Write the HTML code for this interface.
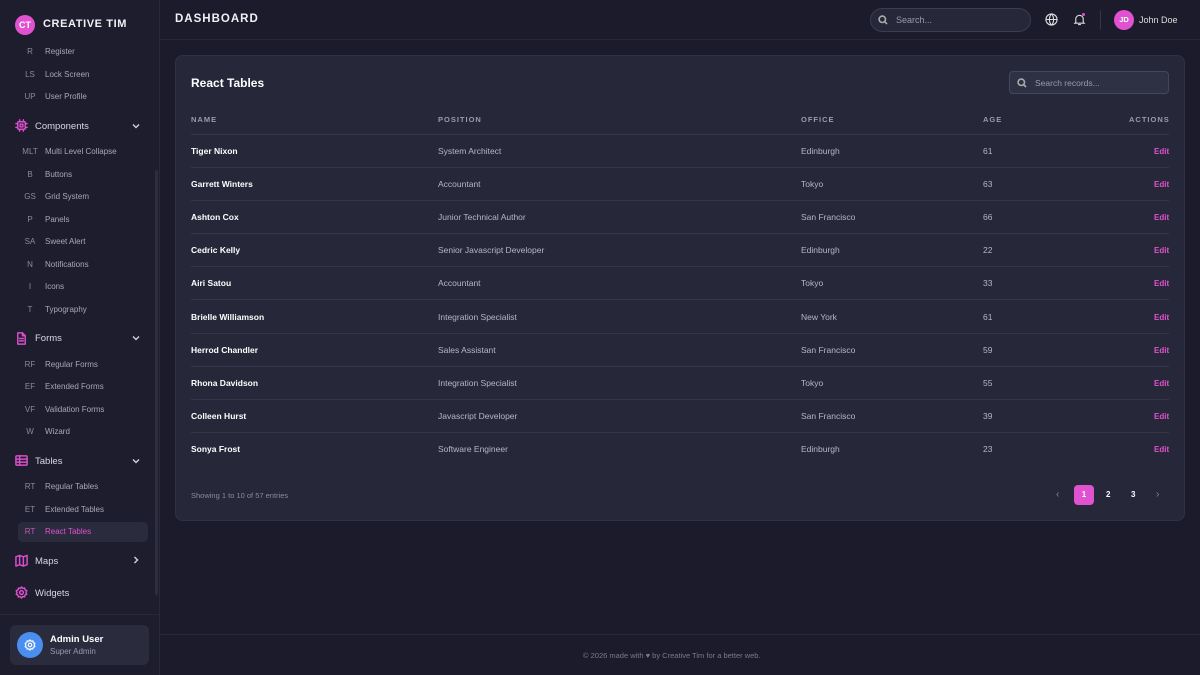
<!DOCTYPE html>
<html><head><meta charset="utf-8"><style>
*{box-sizing:border-box;margin:0;padding:0}
body{width:1200px;height:675px;overflow:hidden;background:#1b1b2b;font-family:"Liberation Sans",sans-serif;color:#e6e6ef;position:relative}
.sb{position:absolute;left:0;top:0;width:160px;height:675px;background:#1d1d2e;border-right:1px solid #272838}
.a{position:absolute;white-space:nowrap}
.sub{font-size:8px;color:#a7a8b6}
.sub b{display:inline-block;width:28px;font-weight:normal;color:#8a8b99;text-align:center;margin-right:1px}
.sec{font-size:9.5px;color:#d8d8e2}
svg.i{position:absolute;left:15px;width:13px;height:13px;fill:none;stroke:#d84fc9;stroke-width:1.6;stroke-linecap:round;stroke-linejoin:round}
svg.ch{position:absolute;left:132px;width:8px;height:8px;fill:none;stroke:#ccc;stroke-width:1.5}
.hd{font-size:7.5px;letter-spacing:1px;color:#9a9bab;font-weight:bold}
.row{position:absolute;left:191px;width:978px;height:1px;background:#34364a}
.c{position:absolute;font-size:8.5px;color:#b6b7c5}
.n{font-weight:bold;color:#fff}
.e{color:#e052cf;font-weight:bold;font-size:8px}
svg.s{position:absolute;width:10px;height:10px;fill:none;stroke:#aaa;stroke-width:1.6}
</style></head><body>
<div class="sb">
 <div class="a" style="left:15px;top:15px;width:20px;height:20px;border-radius:50%;background:#e052cf;color:#fff;font-size:9px;font-weight:bold;text-align:center;line-height:20px">CT</div>
 <div class="a" style="left:43px;top:18px;font-size:11px;font-weight:bold;letter-spacing:0.6px;color:#f0f0f5">CREATIVE TIM</div>
 <div class="a sub" style="top:47px;left:16px"><b>R</b>Register</div>
 <div class="a sub" style="top:70px;left:16px"><b>LS</b>Lock Screen</div>
 <div class="a sub" style="top:92px;left:16px"><b>UP</b>User Profile</div>
 <svg class="i" style="top:119px" viewBox="0 0 14 14"><rect x="3" y="3" width="8" height="8" rx="1"/><rect x="5.5" y="5.5" width="3" height="3"/><path d="M5 1v2M9 1v2M5 11v2M9 11v2M1 5h2M1 9h2M11 5h2M11 9h2"/></svg>
 <div class="a sec" style="left:35px;top:121px">Components</div>
 <svg class="ch" style="top:122px" viewBox="0 0 8 8"><path d="M1 2.5l3 3 3-3"/></svg>
 <div class="a sub" style="top:147px;left:16px"><b>MLT</b>Multi Level Collapse</div>
 <div class="a sub" style="top:170px;left:16px"><b>B</b>Buttons</div>
 <div class="a sub" style="top:192px;left:16px"><b>GS</b>Grid System</div>
 <div class="a sub" style="top:215px;left:16px"><b>P</b>Panels</div>
 <div class="a sub" style="top:237px;left:16px"><b>SA</b>Sweet Alert</div>
 <div class="a sub" style="top:260px;left:16px"><b>N</b>Notifications</div>
 <div class="a sub" style="top:282px;left:16px"><b>I</b>Icons</div>
 <div class="a sub" style="top:305px;left:16px"><b>T</b>Typography</div>
 <svg class="i" style="top:332px" viewBox="0 0 14 14"><path d="M3 1h5l3 3v9H3z"/><path d="M8 1v3h3M5 7h4M5 9.5h4"/></svg>
 <div class="a sec" style="left:35px;top:333px">Forms</div>
 <svg class="ch" style="top:334px" viewBox="0 0 8 8"><path d="M1 2.5l3 3 3-3"/></svg>
 <div class="a sub" style="top:360px;left:16px"><b>RF</b>Regular Forms</div>
 <div class="a sub" style="top:382px;left:16px"><b>EF</b>Extended Forms</div>
 <div class="a sub" style="top:405px;left:16px"><b>VF</b>Validation Forms</div>
 <div class="a sub" style="top:427px;left:16px"><b>W</b>Wizard</div>
 <svg class="i" style="top:454px" viewBox="0 0 14 14"><rect x="1" y="2" width="12" height="10" rx="1"/><path d="M1 5.5h12M1 8.7h12M5 2v10"/></svg>
 <div class="a sec" style="left:35px;top:456px">Tables</div>
 <svg class="ch" style="top:457px" viewBox="0 0 8 8"><path d="M1 2.5l3 3 3-3"/></svg>
 <div class="a sub" style="top:482px;left:16px"><b>RT</b>Regular Tables</div>
 <div class="a sub" style="top:505px;left:16px"><b>ET</b>Extended Tables</div>
 <div class="a" style="left:18px;top:522px;width:130px;height:20px;border-radius:5px;background:#2a2b3d"></div>
 <div class="a sub" style="top:527px;left:16px;color:#e052cf"><b style="color:#c05bb5">RT</b>React Tables</div>
 <svg class="i" style="top:554px" viewBox="0 0 14 14"><path d="M1 3l4-1.5 4 1.5 4-1.5v10L9 13 5 11.5 1 13z M5 1.5v10M9 3v10"/></svg>
 <div class="a sec" style="left:35px;top:556px">Maps</div>
 <svg class="ch" style="top:556px" viewBox="0 0 8 8"><path d="M2.5 1l3 3-3 3"/></svg>
 <svg class="i" style="top:586px" viewBox="0 0 14 14"><circle cx="7" cy="7" r="2"/><path d="M7 1l1.3 1.6 2-.5.5 2 1.9.9-.9 1.9.9 1.9-1.9.9-.5 2-2-.5L7 13l-1.3-1.6-2 .5-.5-2-1.9-.9L2.2 7l-.9-1.9 1.9-.9.5-2 2 .5z"/></svg>
 <div class="a sec" style="left:35px;top:588px">Widgets</div>
 <div class="a" style="left:155px;top:170px;width:3px;height:425px;background:#2c2d3e;border-radius:2px"></div>
 <div class="a" style="left:0;top:614px;width:160px;height:1px;background:#272838"></div>
 <div class="a" style="left:10px;top:625px;width:139px;height:40px;border-radius:6px;background:#2a2b3d"></div>
 <div class="a" style="left:17px;top:632px;width:26px;height:26px;border-radius:50%;background:#4a8ef0"></div>
 <svg class="i" style="left:24px;top:639px;width:12px;height:12px;stroke:#fff;stroke-width:1.4" viewBox="0 0 14 14"><circle cx="7" cy="7" r="2"/><path d="M7 1l1.3 1.6 2-.5.5 2 1.9.9-.9 1.9.9 1.9-1.9.9-.5 2-2-.5L7 13l-1.3-1.6-2 .5-.5-2-1.9-.9L2.2 7l-.9-1.9 1.9-.9.5-2 2 .5z"/></svg>
 <div class="a" style="left:50px;top:634px;font-size:9.5px;font-weight:bold;color:#fff">Admin User</div>
 <div class="a" style="left:50px;top:647px;font-size:8px;color:#9a9bab">Super Admin</div>
</div>
<div class="a" style="left:160px;top:39px;width:1040px;height:1px;background:#26273a"></div>
<div class="a" style="left:175px;top:13px;font-size:11.5px;font-weight:bold;letter-spacing:1px;color:#f0f0f5">DASHBOARD</div>
<div class="a" style="left:870px;top:8px;width:161px;height:24px;border-radius:12px;background:#262839;border:1px solid #3a3c50"></div>
<svg class="s" style="left:878px;top:15px" viewBox="0 0 10 10"><circle cx="4.3" cy="4.3" r="3.2"/><path d="M6.7 6.7L9 9"/></svg>
<div class="a" style="left:896px;top:15px;font-size:9px;color:#9a9bab">Search...</div>
<svg class="s" style="left:1045px;top:13px;width:13px;height:13px;stroke:#ddd;stroke-width:1.2" viewBox="0 0 14 14"><circle cx="7" cy="7" r="6"/><path d="M1 7h12M7 1c-3 3-3 9 0 12M7 1c3 3 3 9 0 12"/></svg>
<svg class="s" style="left:1073px;top:13px;width:13px;height:13px;stroke:#ddd;stroke-width:1.2" viewBox="0 0 14 14"><path d="M3 10V6.5a4 4 0 018 0V10l1 1H2z M5.5 12.5h3"/></svg>
<div class="a" style="left:1082px;top:13px;width:3px;height:3px;border-radius:50%;background:#e052cf"></div>
<div class="a" style="left:1100px;top:10px;width:1px;height:20px;background:#33354a"></div>
<div class="a" style="left:1114px;top:10px;width:20px;height:20px;border-radius:50%;background:#e052cf;color:#fff;font-size:7.5px;font-weight:bold;text-align:center;line-height:20px">JD</div>
<div class="a" style="left:1139px;top:15px;font-size:9px;color:#ddd">John Doe</div>
<div class="a" style="left:175px;top:55px;width:1010px;height:466px;border-radius:8px;background:#262839;border:1px solid #2f3145"></div>
<div class="a" style="left:191px;top:76px;font-size:12px;font-weight:bold;color:#fff">React Tables</div>
<div class="a" style="left:1009px;top:71px;width:160px;height:23px;border-radius:4px;background:#2e3043;border:1px solid #44465a"></div>
<svg class="s" style="left:1017px;top:78px" viewBox="0 0 10 10"><circle cx="4.3" cy="4.3" r="3.2"/><path d="M6.7 6.7L9 9"/></svg>
<div class="a" style="left:1035px;top:78px;font-size:8.5px;color:#9a9bab">Search records...</div>
<div class="a hd" style="left:191px;top:115px">NAME</div>
<div class="a hd" style="left:438px;top:115px">POSITION</div>
<div class="a hd" style="left:801px;top:115px">OFFICE</div>
<div class="a hd" style="left:983px;top:115px">AGE</div>
<div class="a hd" style="left:1129px;top:115px">ACTIONS</div>
<div class="row" style="top:134px"></div>
<div id="rows"></div>
<script>
var d=[["Tiger Nixon","System Architect","Edinburgh",61],["Garrett Winters","Accountant","Tokyo",63],["Ashton Cox","Junior Technical Author","San Francisco",66],["Cedric Kelly","Senior Javascript Developer","Edinburgh",22],["Airi Satou","Accountant","Tokyo",33],["Brielle Williamson","Integration Specialist","New York",61],["Herrod Chandler","Sales Assistant","San Francisco",59],["Rhona Davidson","Integration Specialist","Tokyo",55],["Colleen Hurst","Javascript Developer","San Francisco",39],["Sonya Frost","Software Engineer","Edinburgh",23]];
var h="";d.forEach(function(r,i){var y=146+i*33.1;h+='<div class="c n" style="left:191px;top:'+y+'px">'+r[0]+'</div><div class="c" style="left:438px;top:'+y+'px">'+r[1]+'</div><div class="c" style="left:801px;top:'+y+'px">'+r[2]+'</div><div class="c" style="left:983px;top:'+y+'px">'+r[3]+'</div><div class="c e" style="left:1154px;top:'+(y+1)+'px">Edit</div>';if(i<9)h+='<div class="row" style="top:'+(y+21)+'px"></div>';});document.getElementById("rows").innerHTML=h;
</script>
<div class="a" style="left:191px;top:491px;font-size:7.5px;color:#8a8b99">Showing 1 to 10 of 57 entries</div>
<div class="a" style="left:1056px;top:489px;font-size:10px;color:#888">‹</div>
<div class="a" style="left:1074px;top:485px;width:20px;height:20px;border-radius:4px;background:#e052cf;color:#fff;font-size:8px;font-weight:bold;text-align:center;line-height:20px">1</div>
<div class="a" style="left:1106px;top:490px;font-size:8px;font-weight:bold;color:#fff">2</div>
<div class="a" style="left:1131px;top:490px;font-size:8px;font-weight:bold;color:#fff">3</div>
<div class="a" style="left:1156px;top:489px;font-size:10px;color:#888">›</div>
<div class="a" style="left:160px;top:634px;width:1040px;height:1px;background:#26273a"></div>
<div class="a" style="left:583px;top:651px;font-size:7.5px;color:#7a7b8a">© 2026 made with ♥ by Creative Tim for a better web.</div>
</body></html>
